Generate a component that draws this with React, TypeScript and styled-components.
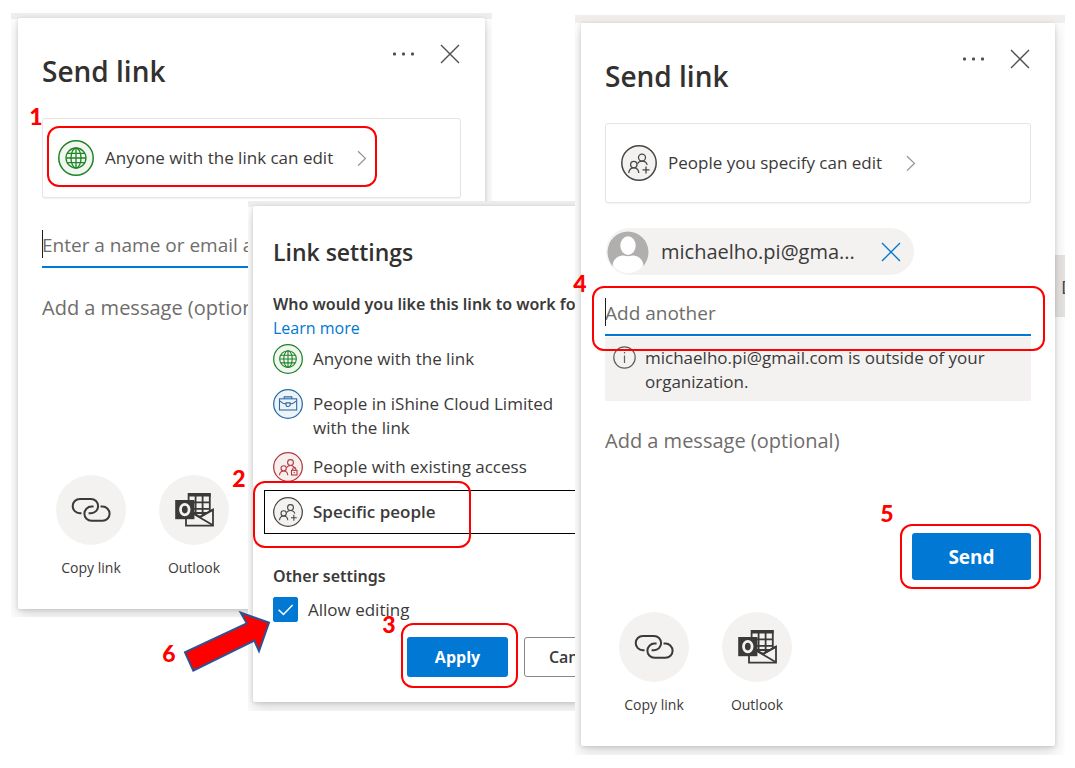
import React, { useState } from "react";
import styled, { createGlobalStyle } from "styled-components";

const blue = "#0078d4";

const GlobalStyle = createGlobalStyle`
  *, *::before, *::after { box-sizing: border-box; }
  body {
    margin: 0;
    background: #fff;
    color: #3b3a39;
    font-family: "Open Sans", "Noto Sans", sans-serif;
    font-size: 17px;
    line-height: 24px;
  }
  button, input, textarea { font: inherit; color: inherit; margin: 0; }
`;

/* The three captures share one grid so that they can overlap. */
const Stage = styled.main`
  display: grid;
  grid-template-columns: 11px 237fr 244fr 83fr 490fr 10px;
  grid-template-rows: auto;
  align-items: start;
`;

const Snip = styled.section<{ $columns: string; $top: number }>`
  position: relative;
  grid-row: 1;
  grid-column: ${(p) => p.$columns};
  margin-top: ${(p) => p.$top}px;
  min-width: 0;
`;

const Frame = styled.div<{ $inset: string; $band: number }>`
  position: relative;
  overflow: hidden;
  padding: ${(p) => p.$inset};
  background: linear-gradient(#efeeec ${(p) => p.$band}px, #fdfdfd ${(p) => p.$band}px);
`;

const Dialog = styled.div<{ $width?: string; $pad: string }>`
  position: relative;
  display: flex;
  flex-direction: column;
  width: ${(p) => p.$width ?? "auto"};
  padding: ${(p) => p.$pad};
  background: #fff;
  border-radius: 2px;
  box-shadow: 0 6px 14px rgba(0, 0, 0, 0.14), 0 1px 4px rgba(0, 0, 0, 0.14);
`;

const Header = styled.header`
  display: flex;
  justify-content: space-between;
  align-items: flex-start;
`;

const Title = styled.h1`
  margin: 11px 0 0;
  font-size: 28px;
  line-height: 36px;
  font-weight: 600;
  color: #323130;
`;

const Subtitle = styled.h2`
  margin: 0 0 24px;
  font-size: 23px;
  line-height: 32px;
  font-weight: 600;
  color: #323130;
`;

const Actions = styled.div`
  display: flex;
  gap: 26px;
  margin-right: 1px;
`;

const IconButton = styled.button`
  display: flex;
  align-items: center;
  justify-content: center;
  height: 24px;
  padding: 0;
  border: 0;
  background: none;
`;

const PermissionCard = styled.button`
  display: flex;
  align-items: center;
  height: 80px;
  margin-top: 29px;
  padding: 0 15px;
  border: 1px solid #e6e5e4;
  border-radius: 3px;
  background: #fff;
  box-shadow: 0 1px 1px rgba(0, 0, 0, 0.05);
  text-align: left;
  white-space: nowrap;
`;

const CardText = styled.span`
  margin: 0 24px 0 11px;
`;

const Field = styled.div<{ $gap: number }>`
  position: relative;
  display: flex;
  height: 44px;
  margin-top: ${(p) => p.$gap}px;
  border-bottom: 2px solid ${blue};
  &::before {
    content: "";
    position: absolute;
    left: 0;
    top: 6px;
    width: 1px;
    height: 28px;
    background: #201f1e;
  }
`;

const TextInput = styled.input`
  flex: 1;
  min-width: 0;
  padding: 0;
  border: 0;
  outline: 0;
  background: transparent;
  font-size: 19px;
  &::placeholder { color: #6f6d6b; opacity: 1; }
`;

const Message = styled.textarea`
  display: block;
  height: 112px;
  margin-top: 20px;
  padding: 8px 0;
  border: 0;
  outline: 0;
  resize: none;
  background: transparent;
  font-size: 20px;
  &::placeholder { color: #6f6d6b; opacity: 1; }
`;

const PrimaryButton = styled.button<{ $height: number; $width: number }>`
  height: ${(p) => p.$height}px;
  width: ${(p) => p.$width}px;
  padding: 0;
  border: 0;
  border-radius: 3px;
  background: ${blue};
  color: #fff;
  font-weight: 700;
`;

const SendButton = styled(PrimaryButton)`
  align-self: flex-end;
  font-size: 19px;
`;

const SecondaryButton = styled.button`
  height: 40px;
  width: 101px;
  padding: 0;
  border: 1px solid #8a8886;
  border-radius: 3px;
  background: #fff;
  font-weight: 600;
`;

const ShareRow = styled.footer<{ $gap: number }>`
  display: flex;
  gap: 33px;
  margin-top: ${(p) => p.$gap}px;
  padding-left: 14px;
`;

const ShareButton = styled.button`
  display: flex;
  flex-direction: column;
  align-items: center;
  gap: 12px;
  width: 70px;
  padding: 0;
  border: 0;
  background: none;
  font-size: 14px;
  line-height: 22px;
  white-space: nowrap;
`;

const ShareCircle = styled.span`
  display: flex;
  align-items: center;
  justify-content: center;
  width: 70px;
  height: 70px;
  border-radius: 50%;
  background: #f3f2f1;
`;

const Chip = styled.div`
  display: flex;
  align-items: center;
  align-self: flex-start;
  height: 47px;
  width: 308px;
  margin: 25px 0 0 1px;
  padding: 0 13px 0 1px;
  border-radius: 24px;
  background: #f3f2f1;
`;

const ChipText = styled.span`
  flex: 1;
  margin-left: 12px;
  font-size: 20px;
`;

const Notice = styled.p`
  display: flex;
  gap: 9px;
  margin: 1px 0 0;
  padding: 9px 8px 7px;
  background: #f3f2f1;
`;

const Question = styled.p`
  margin: 0;
  font-family: "Noto Sans", "Open Sans", sans-serif;
  font-size: 16px;
  font-weight: 600;
  white-space: nowrap;
`;

const LearnMore = styled.a`
  align-self: flex-start;
  color: ${blue};
  font-size: 16px;
  text-decoration: none;
`;

const Options = styled.div`
  display: flex;
  flex-direction: column;
  gap: 1px;
  margin: -3px -9px 0;
`;

const Option = styled.label<{ $selected: boolean }>`
  position: relative;
  display: flex;
  gap: 10px;
  min-height: 44px;
  padding: 6px 8px 3px;
  border: 1px solid ${(p) => (p.$selected ? "#000" : "transparent")};
  font-weight: ${(p) => (p.$selected ? 600 : 400)};
`;

const HiddenRadio = styled.input`
  position: absolute;
  opacity: 0;
`;

const OptionText = styled.span`
  max-width: 256px;
  padding-top: 3px;
`;

const CheckRow = styled.label`
  display: flex;
  align-items: center;
  gap: 10px;
  margin-top: 9px;
`;

const CheckBox = styled.span`
  display: grid;
  width: 25px;
  height: 25px;
  & > * { grid-area: 1 / 1; }
  & > svg { pointer-events: none; }
`;

const CheckInput = styled.input`
  appearance: none;
  width: 25px;
  height: 25px;
  border: 1px solid #323130;
  border-radius: 2px;
  &:checked { background: ${blue}; border-color: ${blue}; }
`;

const ButtonRow = styled.div`
  display: flex;
  justify-content: flex-end;
  gap: 16px;
  margin-top: 15px;
  font-size: 16px;
`;

const SettingsHeading = styled(Question)`
  margin-top: 30px;
`;

const SideCommand = styled.div`
  position: absolute;
  right: 0;
  top: 240px;
  width: 10px;
  height: 62px;
  padding: 20px 0 0 6px;
  overflow: hidden;
  background: #e5e3e1;
  color: #4a4846;
  font-size: 19px;
`;

const Ring = styled.div<{ $box: [number, number]; $w: string; $h: number; $right?: number }>`
  position: absolute;
  top: ${(p) => p.$box[1]}px;
  ${(p) => (p.$right === undefined ? `left: ${p.$box[0]}px;` : `right: ${p.$right}px;`)}
  width: ${(p) => p.$w};
  height: ${(p) => p.$h}px;
  border: 2px solid #fe0000;
  border-radius: 12px;
  pointer-events: none;
`;

const Step = styled.span<{ $x: number; $y: number; $fromRight?: boolean }>`
  position: absolute;
  top: ${(p) => p.$y}px;
  ${(p) => (p.$fromRight ? "right" : "left")}: ${(p) => p.$x}px;
  width: 14px;
  color: #fe0000;
  font-family: Lato, "Open Sans", sans-serif;
  font-size: 23px;
  line-height: 22px;
  font-weight: 900;
  text-align: center;
`;

const ArrowDrawing = styled.svg`
  position: absolute;
  left: -68px;
  top: 407px;
`;

const Dots = () => (
  <svg width="21" height="4" viewBox="0 0 21 4" fill="#504e4d">
    <rect x="0" y="0.5" width="3" height="3" rx="1" />
    <rect x="9" y="0.5" width="3" height="3" rx="1" />
    <rect x="18" y="0.5" width="3" height="3" rx="1" />
  </svg>
);

const Cross = ({ color = "#504e4d" }: { color?: string }) => (
  <svg width="20" height="20" viewBox="0 0 20 20" fill="none" stroke={color} strokeWidth="1.4">
    <path d="M1 1 19 19M19 1 1 19" />
  </svg>
);

const Chevron = () => (
  <svg width="10" height="16" viewBox="0 0 10 16" fill="none" stroke="#979593" strokeWidth="1.3">
    <path d="M1 1.2 8.4 8.4 1 15.6" />
  </svg>
);

type Kind = "globe" | "briefcase" | "lock" | "plus";
const tint: Record<Kind, [string, string]> = {
  globe: ["#1f8426", "#f1f6f1"],
  briefcase: ["#2a6aa8", "#eef3f8"],
  lock: ["#b5383f", "#f5f0ee"],
  plus: ["#484644", "#f3f2f1"],
};

const Badge = styled.svg`
  flex: none;
`;

const AudienceIcon = ({ kind, size }: { kind: Kind; size: number }) => {
  const [stroke, fill] = tint[kind];
  return (
    <Badge width={size} height={size} viewBox="0 0 36 36" fill="none" stroke={stroke} strokeWidth="1.3">
      <circle cx="18" cy="18" r="17.2" fill={fill} strokeWidth="1.5" />
      {kind === "globe" && (
        <>
          <circle cx="18" cy="18" r="10" />
          <ellipse cx="18" cy="18" rx="5" ry="10" />
          <path d="M18 8v20M9.2 13.4h17.6M8 18h20M9.2 22.6h17.6" />
        </>
      )}
      {kind === "briefcase" && (
        <>
          <rect x="7.8" y="11.8" width="20.6" height="13.4" />
          <path d="M13.4 11.6V9.4h9.2v2.2M8 14.2c3 2.6 5.4 3.6 7.6 3.9M28.2 14.2c-3 2.6-5.4 3.6-7.6 3.9M15.6 16.6h5v2.2a2.5 2.2 0 0 1-5 0z" />
        </>
      )}
      {(kind === "lock" || kind === "plus") && (
        <>
          <circle cx="21" cy="12.6" r="3.5" />
          <circle cx="12.8" cy="19.6" r="3.2" />
          <path d="M7.8 28c.2-3 2.2-5.2 5-5.2s4.8 2.2 5 5.2M16.4 18.6c.9-1.5 2.6-2.5 4.6-2.5 2.6 0 4.6 1.4 5.2 3.8" />
        </>
      )}
      {kind === "lock" && (
        <>
          <rect x="22.2" y="22" width="6.6" height="5.6" fill={fill} />
          <path d="M23.6 22v-1.6a1.9 1.9 0 0 1 3.8 0V22M25.5 24v1.6" />
        </>
      )}
      {kind === "plus" && <path d="M25 21.4v7M21.5 24.9h7" />}
    </Badge>
  );
};

const LinkIcon = () => (
  <svg width="40" height="26" viewBox="0 0 40 26" fill="none" stroke="#3b3a39" strokeWidth="2">
    <path d="M10.5 16.2H8.8A7.1 7.1 0 0 1 8.8 2H20a7.1 7.1 0 0 1 0 14.2h-2.4" />
    <path d="M22.6 9.6h-2.1a7.1 7.1 0 0 0 0 14.2h11a7.1 7.1 0 0 0 0-14.2h-2" />
  </svg>
);

const OutlookIcon = () => (
  <svg width="39" height="34" viewBox="0 0 39 34" fill="none" stroke="#3b3a39" strokeWidth="1.8">
    <path d="M13.6 1h21.2v19H13.6zM20.6 3v20M27.6 3v20M14 9.4h21M14 15.8h21" />
    <path d="M13 1.8h22.6" strokeWidth="3.4" />
    <path d="M11 16.6 25 23.8l13-7.2v16H11z" fill="#f3f2f1" />
    <path d="M18 20.4 37.6 32M25.4 24 38 16.8" />
    <rect x="0.2" y="7" width="19.2" height="19.2" fill="#3b3a39" stroke="none" />
    <ellipse cx="9.8" cy="16.6" rx="4.3" ry="5.2" stroke="#f3f2f1" strokeWidth="2.8" />
  </svg>
);

const Avatar = () => (
  <Badge width="42" height="44" viewBox="0 0 42 44">
    <circle cx="21" cy="22" r="21" fill="#f8f8f8" />
    <path d="M0.5 22a20.5 20.5 0 0 1 41 0c0 5-1.6 9.6-4.6 13.4L5 35.4C2.2 31.6 .5 27 .5 22z" fill="#b1afad" />
    <path d="M5.6 34.5C7 28 12 25.6 17 25.6h8c5 0 10 2.4 11.4 8.9C33 39.5 27.5 42.8 21 42.8S9 39.5 5.6 34.5z" fill="#fff" />
    <ellipse cx="21" cy="15.6" rx="8.4" ry="10" fill="#fff" stroke="#b1afad" strokeWidth="1.4" />
  </Badge>
);

const InfoIcon = () => (
  <Badge width="23" height="23" viewBox="0 0 23 23" fill="none" stroke="#605e5c" strokeWidth="1.2">
    <circle cx="11.5" cy="11.5" r="10.7" />
    <path d="M11.5 9.5V17M11.5 6v1.6" />
  </Badge>
);

const DialogHeader = () => (
  <Header>
    <Title>Send link</Title>
    <Actions>
      <IconButton aria-label="More options"><Dots /></IconButton>
      <IconButton aria-label="Close"><Cross /></IconButton>
    </Actions>
  </Header>
);

const ShareTargets = ({ gap }: { gap: number }) => (
  <ShareRow $gap={gap}>
    <ShareButton>
      <ShareCircle><LinkIcon /></ShareCircle>
      Copy link
    </ShareButton>
    <ShareButton>
      <ShareCircle><OutlookIcon /></ShareCircle>
      Outlook
    </ShareButton>
  </ShareRow>
);

const audiences: { kind: Kind; label: string }[] = [
  { kind: "globe", label: "Anyone with the link" },
  { kind: "briefcase", label: "People in iShine Cloud Limited with the link" },
  { kind: "lock", label: "People with existing access" },
  { kind: "plus", label: "Specific people" },
];

export default function App() {
  const [audience, setAudience] = useState<Kind>("plus");
  const [editing, setEditing] = useState(true);

  return (
    <>
      <GlobalStyle />
      <Stage>
        <Snip $columns="2 / 4" $top={13}>
          <Frame $inset="5px 7px 8px" $band={6}>
            <Dialog $pad="24px 24px 30px">
              <DialogHeader />
              <PermissionCard>
                <AudienceIcon kind="globe" size={36} />
                <CardText>Anyone with the link can edit</CardText>
                <Chevron />
              </PermissionCard>
              <Field $gap={26}>
                <TextInput aria-label="Recipients" placeholder="Enter a name or email address" />
              </Field>
              <Message aria-label="Message" placeholder="Add a message (optional)" />
              <SendButton $height={47} $width={119}>Send</SendButton>
              <ShareTargets gap={28} />
            </Dialog>
          </Frame>
          <Ring $box={[36, 113]} $w="330px" $h={61} />
          <Step $x={18} $y={92}>1</Step>
        </Snip>

        <Snip $columns="3 / 5" $top={201}>
          <Frame $inset="5px 0 9px 5px" $band={6}>
            <Dialog $width="392px" $pad="30px 20px 25px">
              <Subtitle>Link settings</Subtitle>
              <Question>Who would you like this link to work for?</Question>
              <LearnMore href="#learn">Learn more</LearnMore>
              <Options role="radiogroup" aria-label="Link audience">
                {audiences.map(({ kind, label }) => (
                  <Option key={kind} $selected={audience === kind}>
                    <HiddenRadio type="radio" name="audience" checked={audience === kind} onChange={() => setAudience(kind)} />
                    <AudienceIcon kind={kind} size={30} />
                    <OptionText>{label}</OptionText>
                  </Option>
                ))}
              </Options>
              <SettingsHeading>Other settings</SettingsHeading>
              <CheckRow>
                <CheckBox>
                  <CheckInput type="checkbox" checked={editing} onChange={(e) => setEditing(e.target.checked)} />
                  <svg width="25" height="25" viewBox="0 0 25 25" fill="none" stroke="#fff" strokeWidth="1.5">
                    <path d="M5.6 12.8 10.4 17.4 19.6 8" />
                  </svg>
                </CheckBox>
                Allow editing
              </CheckRow>
              <ButtonRow>
                <PrimaryButton $height={40} $width={101}>Apply</PrimaryButton>
                <SecondaryButton>Cancel</SecondaryButton>
              </ButtonRow>
            </Dialog>
          </Frame>
          <Ring $box={[5, 280]} $w="218px" $h={67} />
          <Step $x={-16} $y={266}>2</Step>
          <Ring $box={[153, 422]} $w="117px" $h={65} />
          <Step $x={134} $y={412}>3</Step>
          <ArrowDrawing width="94" height="68" viewBox="180 608 94 68">
            <path
              d="M185 652.3 193.3 670.7 254.3 640.7 259 651 269 622.7 240.7 612.7 246.7 623.3z"
              fill="#fe0000"
              stroke="#2f528f"
              strokeWidth="2"
            />
          </ArrowDrawing>
          <Step $x={-86} $y={441}>6</Step>
        </Snip>

        <Snip $columns="5 / 6" $top={15}>
          <Frame $inset="8px 10px 9px 6px" $band={8}>
            <SideCommand>D</SideCommand>
            <Dialog $pad="24px 24px 30px">
              <DialogHeader />
              <PermissionCard>
                <AudienceIcon kind="plus" size={36} />
                <CardText>People you specify can edit</CardText>
                <Chevron />
              </PermissionCard>
              <Chip>
                <Avatar />
                <ChipText>michaelho.pi@gma...</ChipText>
                <IconButton aria-label="Remove recipient"><Cross color={blue} /></IconButton>
              </Chip>
              <Field $gap={17}>
                <TextInput aria-label="More recipients" placeholder="Add another" />
              </Field>
              <Notice>
                <InfoIcon />
                <span>michaelho.pi@gmail.com is outside of your organization.</span>
              </Notice>
              <Message aria-label="Message" placeholder="Add a message (optional)" />
              <SendButton $height={47} $width={119}>Send</SendButton>
              <ShareTargets gap={32} />
            </Dialog>
          </Frame>
          <Ring $box={[17, 271]} $w="calc(100% - 37px)" $h={65} />
          <Step $x={-2} $y={257}>4</Step>
          <Ring $box={[0, 509]} $right={24} $w="141px" $h={65} />
          <Step $x={171} $y={487} $fromRight>5</Step>
        </Snip>
      </Stage>
    </>
  );
}
